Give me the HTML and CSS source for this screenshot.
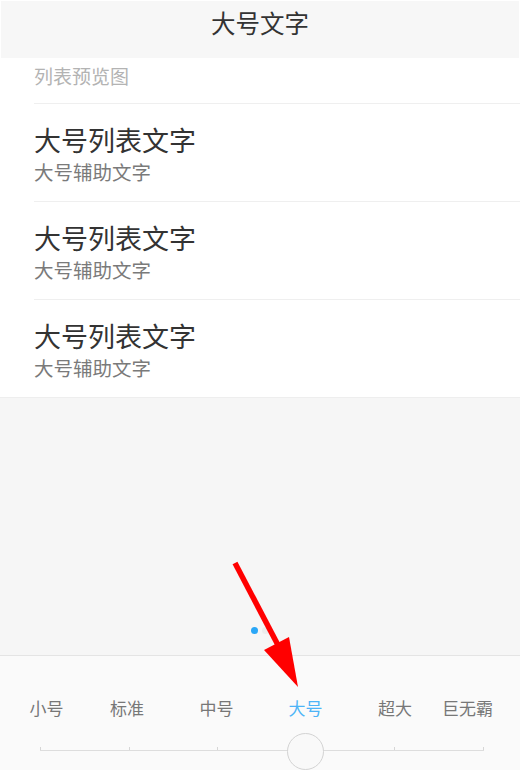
FILE: index.html
```html
<!DOCTYPE html>
<html lang="zh-CN">
<head>
<meta charset="utf-8">
<title>大号文字</title>
<link rel="stylesheet" href="styles.css">
</head>
<body>
<div class="page">
  <header class="header"><h1 class="title">大号文字</h1></header>
  <section class="list">
    <div class="caption">列表预览图</div>
    <div class="item">
      <div class="item-title">大号列表文字</div>
      <div class="item-sub">大号辅助文字</div>
    </div>
    <div class="item">
      <div class="item-title">大号列表文字</div>
      <div class="item-sub">大号辅助文字</div>
    </div>
    <div class="item">
      <div class="item-title">大号列表文字</div>
      <div class="item-sub">大号辅助文字</div>
    </div>
  </section>
  <section class="preview">
    <div class="dots"><span class="dot active"></span><span class="dot"></span></div>
  </section>
  <section class="panel">
    <div class="labels">
      <span class="label">小号</span>
      <span class="label">标准</span>
      <span class="label">中号</span>
      <span class="label active">大号</span>
      <span class="label">超大</span>
      <span class="label">巨无霸</span>
    </div>
    <div class="slider">
      <div class="track">
        <span class="tick"></span><span class="tick"></span><span class="tick"></span>
        <span class="tick"></span><span class="tick"></span><span class="tick"></span>
      </div>
      <div class="knob"></div>
    </div>
  </section>
  <svg class="arrow" width="520" height="770" viewBox="0 0 520 770">
    <line x1="235" y1="563" x2="279" y2="647" stroke="#ff0000" stroke-width="5.5"/>
    <polygon points="298,687 264,650 289,637" fill="#ff0000"/>
  </svg>
</div>
</body>
</html>
```

FILE: styles.css
```css
html, body {
  margin: 0;
  padding: 0;
  background: #ffffff;
}
body {
  font-family: "Noto Sans CJK SC", "Noto Sans", sans-serif;
  width: 520px;
  height: 770px;
  overflow: hidden;
}
.page {
  position: relative;
  width: 520px;
  height: 770px;
  display: flex;
  flex-direction: column;
}
.header {
  margin: 1px 1px 0 1px;
  height: 57px;
  background: #f7f7f7;
  box-sizing: border-box;
  padding-top: 6px;
}
.title {
  margin: 0;
  font-size: 24.5px;
  line-height: 32px;
  font-weight: 400;
  color: #333333;
  text-align: center;
}
.list {
  background: #ffffff;
  border-bottom: 1px solid #eeeeee;
}
.caption {
  padding: 6px 0 15px 34px;
  font-size: 19px;
  line-height: 24px;
  color: #b3b3b3;
}
.item {
  margin-left: 34px;
  border-top: 1px solid #efefef;
  height: 77px;
  padding-top: 20px;
}
.item-title {
  font-size: 27px;
  line-height: 32px;
  color: #333333;
}
.item-sub {
  margin-top: 4px;
  font-size: 19.5px;
  line-height: 24px;
  color: #7a7a7a;
}
.preview {
  flex: 1;
  background: #f6f6f6;
  display: flex;
  flex-direction: column;
  justify-content: flex-end;
  padding-bottom: 21px;
}
.dots {
  display: flex;
  justify-content: center;
  gap: 4px;
}
.dot {
  width: 7px;
  height: 7px;
  border-radius: 50%;
  background: #ececec;
}
.dot.active {
  background: #2aa7f7;
}
.panel {
  height: 114px;
  border-top: 1px solid #e4e4e4;
  background: #fafafa;
}
.labels {
  display: grid;
  grid-template-columns: 67px 94px 85px 93px 86px 59px;
  padding: 40px 0 0 13px;
}
.label {
  text-align: center;
  font-size: 17px;
  line-height: 24px;
  color: #777777;
}
.label.active {
  color: #4db4f7;
}
.slider {
  position: relative;
  margin-top: 12px;
  height: 37px;
}
.track {
  margin-left: 40px;
  width: 444px;
  height: 3px;
  padding-top: 15px;
  display: flex;
  justify-content: space-between;
  align-items: flex-end;
  border-bottom: 1px solid #dddddd;
}
.tick {
  width: 1px;
  height: 3px;
  background: #d6d6d6;
}
.knob {
  position: absolute;
  left: 287px;
  top: 1px;
  width: 37px;
  height: 37px;
  box-sizing: border-box;
  border-radius: 50%;
  border: 1.5px solid #d3d3d3;
  background: #f9f9f9;
}
.arrow {
  position: absolute;
  left: 0;
  top: 0;
  pointer-events: none;
}
```
